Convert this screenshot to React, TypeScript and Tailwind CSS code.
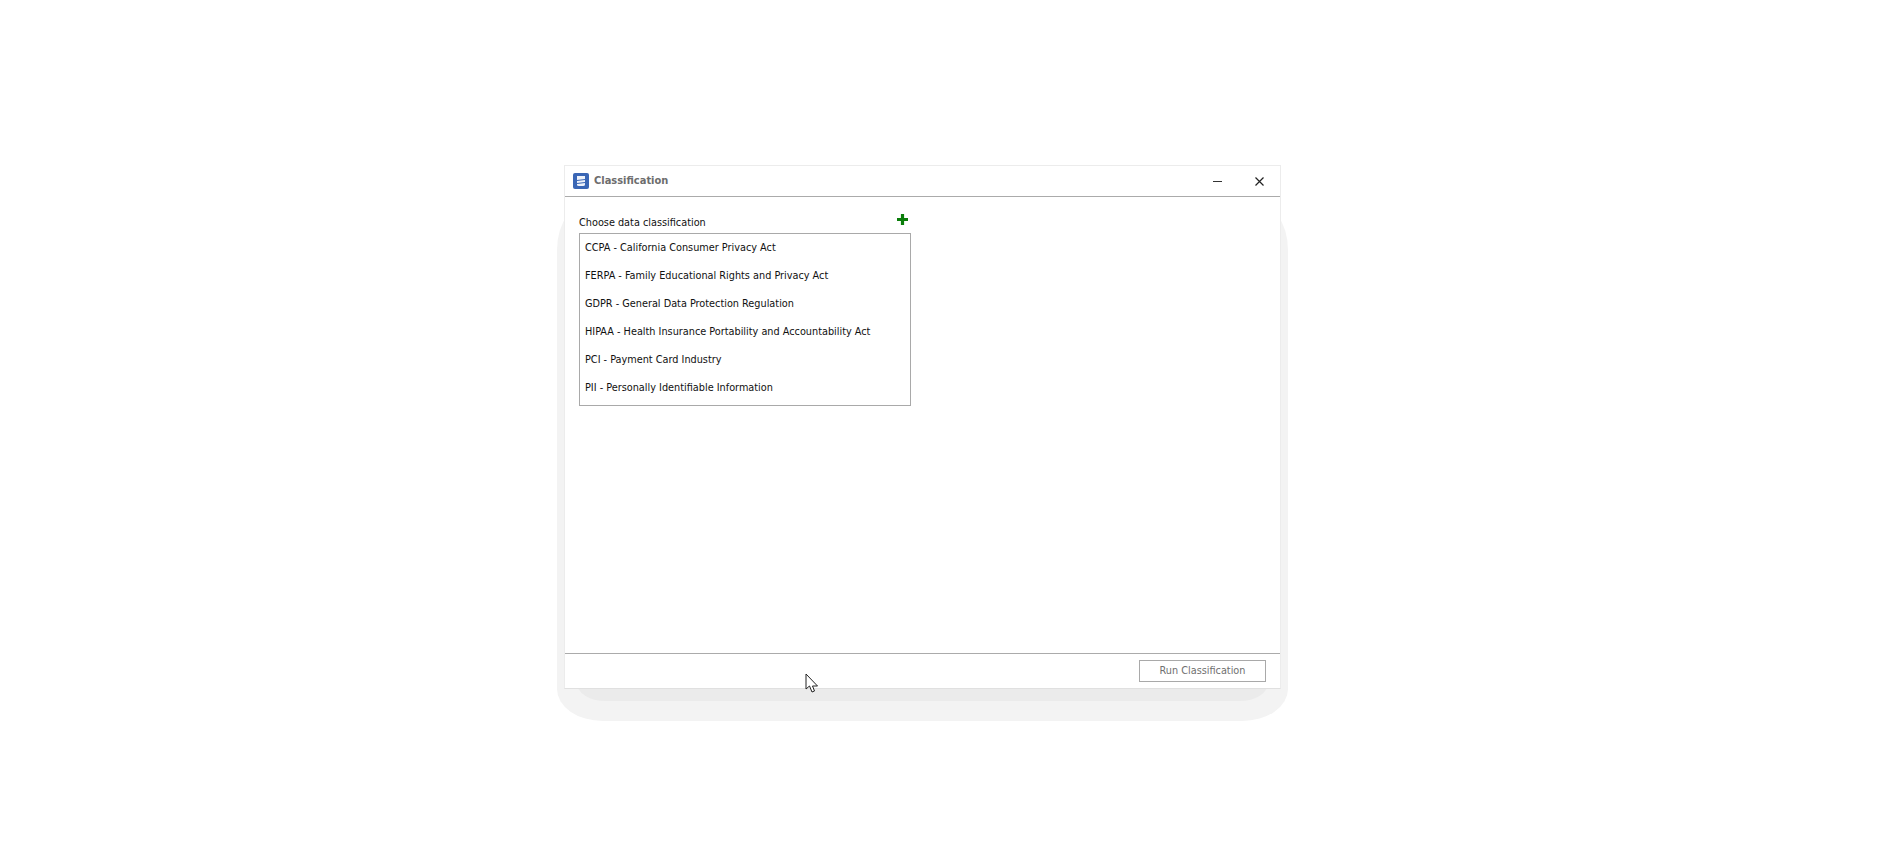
const items = [
  "CCPA - California Consumer Privacy Act",
  "FERPA - Family Educational Rights and Privacy Act",
  "GDPR - General Data Protection Regulation",
  "HIPAA - Health Insurance Portability and Accountability Act",
  "PCI - Payment Card Industry",
  "PII - Personally Identifiable Information",
];

export default function App() {
  return (
    <div className="h-[844px] w-[1884px] overflow-hidden bg-white pl-[564px] pt-[165px] font-['DejaVu_Sans_Condensed','Roboto',sans-serif] text-[10.8px] text-[#111]">
      <div className="relative h-[524px] w-[717px]">
        <div className="absolute left-[-7px] right-[-7px] top-[35px] bottom-[-32px] rounded-tl-[36px_50px] rounded-tr-[36px_50px] rounded-bl-[46px_32px] rounded-br-[46px_32px] bg-[#f3f3f3]" />
        <div className="absolute left-[13px] right-[13px] top-[35px] bottom-[-12px] rounded-bl-[28px_18px] rounded-br-[28px_18px] bg-[#ebebeb]" />
        <div className="relative flex h-full flex-col border border-[#ececec] border-b-[#e0e0e0] bg-white">
          <div className="flex h-[31px] shrink-0 items-center border-b border-[#ababab] pl-[8px] pr-[16px]">
            <svg width="16" height="16" viewBox="0 0 16 16" className="shrink-0">
              <rect width="16" height="16" rx="2" fill="#3a66b5" />
              <path d="M4 3h8v3l-8 1zM4 8l8-1v2l-8 1zM4 11l8-1v1.5q0 1.5-2 1.5h-4q-2 0-2-1z" fill="#eef2fa" />
            </svg>
            <span className="ml-[5px] text-[11px] font-bold text-[#6d6d6d]">Classification</span>
            <div className="ml-auto flex items-center gap-[33px]">
              <svg width="9" height="9" viewBox="0 0 9 9"><path d="M0 4.5h9" stroke="#333" strokeWidth="1" /></svg>
              <svg width="9" height="9" viewBox="0 0 9 9"><path d="M.5.5l8 8M8.5.5l-8 8" stroke="#222" strokeWidth="1.2" /></svg>
            </div>
          </div>
          <div className="flex-1 pl-[14px] pt-[17px]">
            <div className="flex h-[19px] w-[332px] items-start justify-between">
              <span className="mt-[1px] leading-[16px]">Choose data classification</span>
              <svg width="11" height="11" viewBox="0 0 11 11" className="mr-[3px]"><path d="M5.5 0v11M0 5.5h11" stroke="#0a7d0a" strokeWidth="3.2" /></svg>
            </div>
            <ul className="h-[173px] w-[332px] border border-[#a9a9a9] pl-[5px]">
              {items.map((item) => (
                <li key={item} className="flex h-[28px] items-center">{item}</li>
              ))}
            </ul>
          </div>
          <div className="flex h-[35px] shrink-0 items-center justify-end border-t border-[#ababab] pr-[14px]">
            <button className="h-[22px] w-[127px] border border-[#a9a9a9] text-[#6f6f6f]">Run Classification</button>
          </div>
        </div>
        <svg width="14" height="21" viewBox="0 0 14 21" className="absolute left-[241px] top-[508px]">
          <path d="M1 1v15l3.5-3 2.5 6 2.5-1-2-5H12.5z" fill="#fff" stroke="#222" strokeWidth="1" />
        </svg>
      </div>
    </div>
  );
}
